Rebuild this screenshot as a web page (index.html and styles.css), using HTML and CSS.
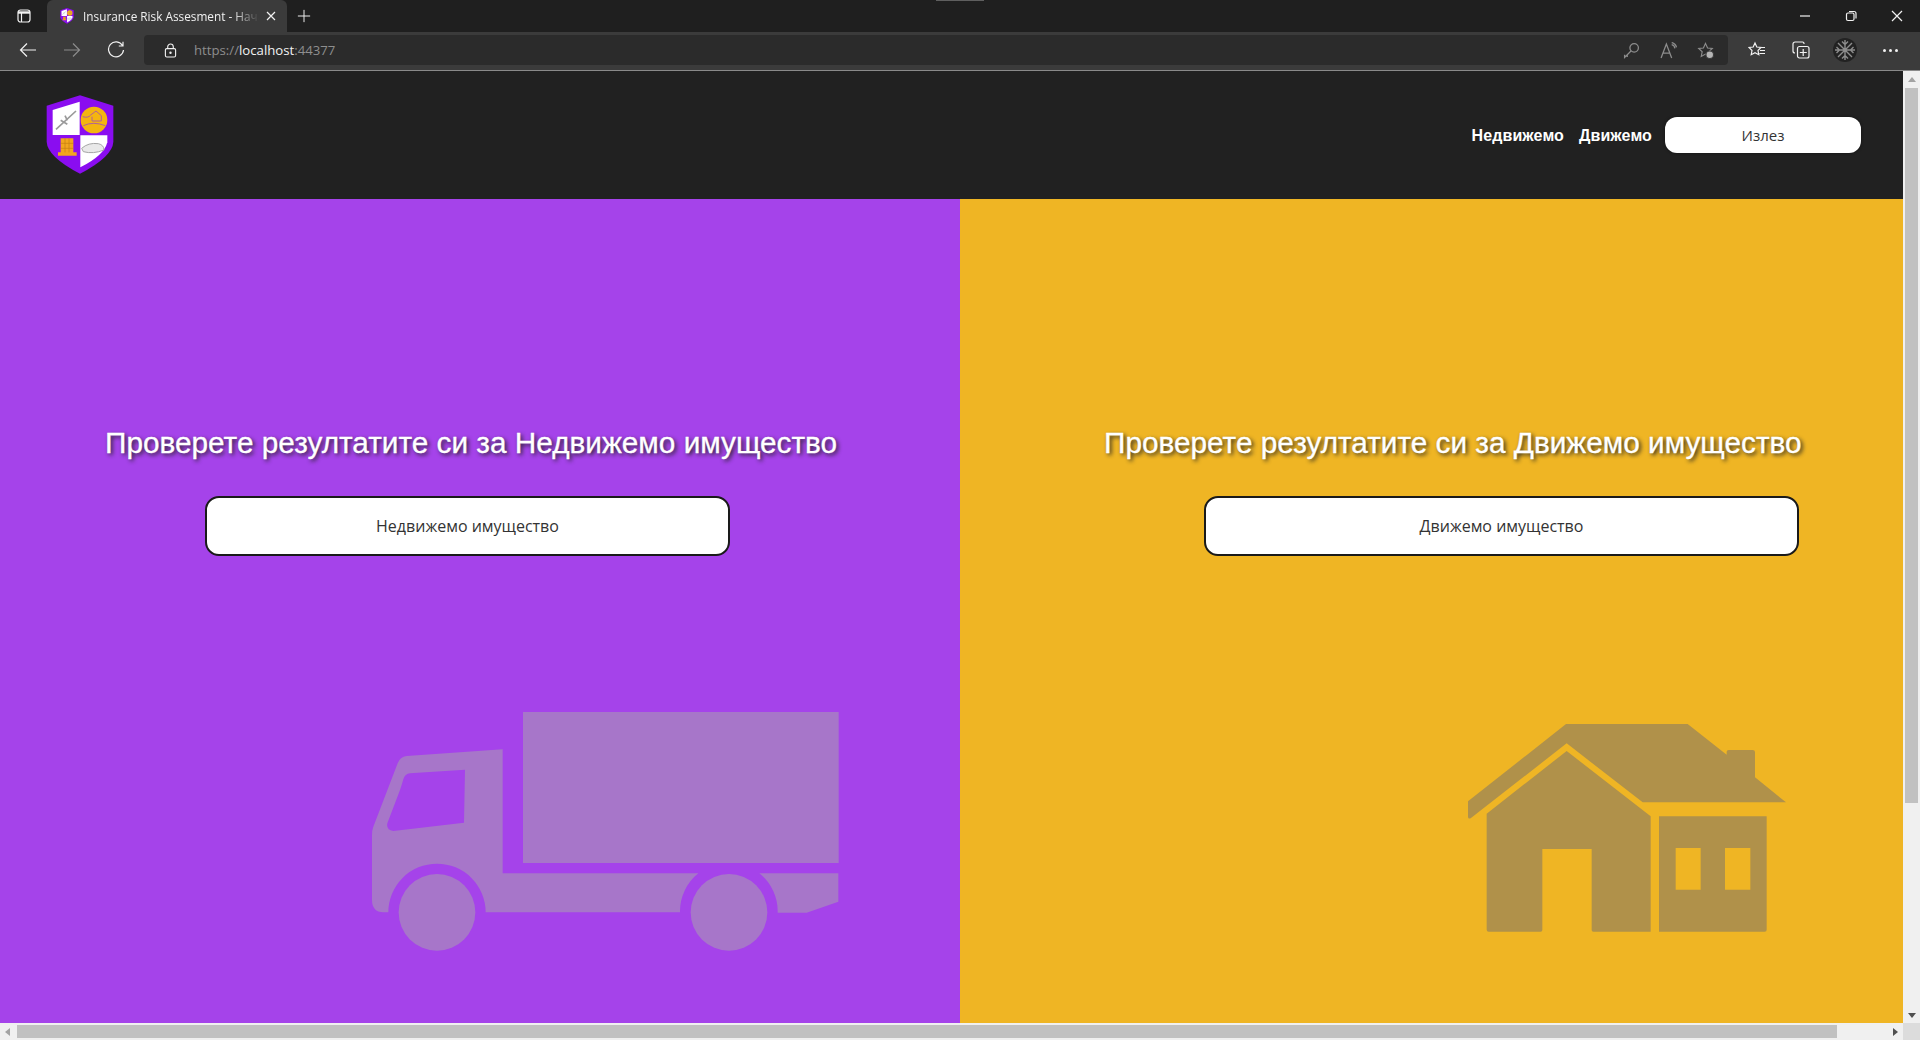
FILE: index.html
```html
<!DOCTYPE html>
<html lang="bg">
<head>
<meta charset="utf-8">
<title>Insurance Risk Assesment</title>
<link rel="stylesheet" href="styles.css">
</head>
<body>
<div class="tabstrip">
  <svg class="ic sidebar-ic" viewBox="0 0 14 14"><rect x="1" y="1" width="12" height="12" rx="2.500"/><path d="M1 3.500h12" stroke-width="2.400"/><path d="M4.500 4v9"/></svg>
  <div class="tab">
    <svg class="favicon" viewBox="0 0 300 300"><use href="#shield"/></svg>
    <span class="tab-title">Insurance Risk Assesment - Нача</span>
    <svg class="ic tab-close" viewBox="0 0 10 10"><path d="M1 1l8 8M9 1l-8 8"/></svg>
  </div>
  <svg class="ic tab-new" viewBox="0 0 16 16"><path d="M8 1v14M1 8h14"/></svg>
  <div class="grabber"></div>
  <div class="winctl">
    <svg class="ic" viewBox="0 0 12 12"><path d="M1 6h10"/></svg>
    <svg class="ic" viewBox="0 0 12 12"><rect x="1.500" y="3" width="7.500" height="7.500" rx="1.500"/><path d="M4 1.500h5a2 2 0 0 1 2 2v5"/></svg>
    <svg class="ic" viewBox="0 0 12 12"><path d="M1 1l10 10M11 1L1 11"/></svg>
  </div>
</div>
<div class="toolbar">
  <svg class="ic nav-ic" viewBox="0 0 18 18"><path d="M17 9H1.500M8 2.500L1.500 9 8 15.500"/></svg>
  <svg class="ic nav-ic dim" viewBox="0 0 18 18"><path d="M1 9h15.500M10 2.500L16.500 9 10 15.500"/></svg>
  <svg class="ic nav-ic" viewBox="0 0 18 18"><path d="M15.500 4.500A7.500 7.500 0 1 0 16.500 9M16 .8v4.200h-4.200"/></svg>
  <div class="urlbar">
    <svg class="ic lock" viewBox="0 0 14 16"><rect x="1.500" y="6" width="11" height="9" rx="1.500"/><path d="M4 6V4a3 3 0 0 1 6 0v2"/><circle cx="7" cy="10.500" r=".7"/></svg>
    <span class="url"><span class="url-dim">https://</span>localhost<span class="url-dim">:44377</span></span>
    <div class="url-actions">
      <svg class="ic dim" viewBox="0 0 16 16"><circle cx="10.500" cy="5.500" r="4"/><path d="M7.500 8.500L1.500 14.500v-2.500M4 12v2"/></svg>
      <svg class="ic dim" viewBox="0 0 16 16"><path d="M1 15L6 2l5 13M2.800 10.500h6.400M11 2.500a4 4 0 0 1 3 3.500M11 .5a6 6 0 0 1 4.500 4.500"/></svg>
      <svg class="ic dim" viewBox="0 0 18 18"><path d="M9 1.500l2.200 4.800 5 .6-3.700 3.400 1 5-4.500-2.500-4.500 2.500 1-5L1.800 6.900l5-.6z"/><circle class="solid" cx="13.500" cy="13.500" r="4"/></svg>
    </div>
  </div>
  <div class="tools">
    <svg class="ic" viewBox="0 0 18 18"><path d="M7 2l1.800 4 4.200.5-3 3 .8 4.200L7 11.600 3.200 13.700 4 9.500 1 6.500 5.200 6zM12 6.500h5M12 9.500h5M11.500 12.500h5.500"/></svg>
    <svg class="ic" viewBox="0 0 18 18"><rect x="5.500" y="5.500" width="11.500" height="11.500" rx="2"/><path d="M11.200 8v7M7.800 11.500h7M12 3V2.500A1.500 1.500 0 0 0 10.500 1H3a2 2 0 0 0-2 2v7A2 2 0 0 0 3 12h0"/></svg>
    <div class="avatar"><svg viewBox="0 0 24 24"><path d="M12 2v20M2 12h20M5 5l14 14M19 5L5 19M9 3.500l3 3 3-3M9 20.500l3-3 3 3M3.500 9l3 3-3 3M20.500 9l-3 3 3 3"/></svg></div>
    <div class="dots"><i></i><i></i><i></i></div>
  </div>
</div>
<div class="viewport">
  <main class="page">
    <header class="site-header">
      <svg class="logo" viewBox="0 0 300 300" aria-label="logo">
        <defs>
          <g id="shield">
            <path d="M150 31L250 62V170Q248 215 150 266Q52 215 50 170V62Z" fill="#8a0df0"/>
            <path d="M68 75L149 50V150H68Z" fill="#fff"/>
            <path d="M151 151H232V172Q222 212 151 247Z" fill="#fff"/>
            <circle cx="192" cy="105" r="40" fill="#f4b50f"/>
            <path d="M158 95Q175 100 182 90L198 78L214 92V108H186V95M160 122Q190 108 226 122" stroke="#b0619a" stroke-width="3" fill="none"/>
            <path d="M92 160H130V202H140V212H84V202H92Z" fill="#f2a61e"/>
            <path d="M105 160V202M117 160V202M92 175H130M92 190H130" stroke="#c47f10" stroke-width="2"/>
            <path d="M78 133L138 78M92 106L112 118M105 92L112 106" stroke="#9a9a9a" stroke-width="5" fill="none"/>
            <path d="M155 190Q175 172 205 176Q222 180 222 195Q190 208 160 200Z" fill="#e9e9e9" stroke="#a5a5a5" stroke-width="3"/>
          </g>
        </defs>
        <use href="#shield"/>
      </svg>
      <nav class="site-nav">
        <a class="nav-link">Недвижемо</a>
        <a class="nav-link">Движемо</a>
        <button class="logout">Излез</button>
      </nav>
    </header>
    <div class="panels">
      <section class="panel panel-left">
        <h2 class="panel-title title-left">Проверете резултатите си за Недвижемо имущество</h2>
        <button class="cta cta-left">Недвижемо имущество</button>
        <svg class="art truck" viewBox="0 0 1500 840">
          <path fill-rule="evenodd" d="M458 178L170 198Q150 200 143 220L70 410Q66 420 66 435V630Q66 666 100 667H115A146 146 0 0 1 407 667H990A146 146 0 0 1 1045 550H458ZM345 239L180 250Q165 251 160 268Q157 280 150 300L112 400Q108 420 130 423L342 398Z"/>
          <path d="M1228 550H1465V635L1370 668H1283A146 146 0 0 0 1228 550Z"/>
          <rect x="519" y="66" width="947" height="453"/>
          <circle cx="261" cy="667" r="115"/>
          <circle cx="1137" cy="667" r="115"/>
        </svg>
      </section>
      <section class="panel panel-right">
        <h2 class="panel-title title-right">Проверете резултатите си за Движемо имущество</h2>
        <button class="cta cta-right">Движемо имущество</button>
        <svg class="art house" viewBox="0 0 1140 780">
          <path d="M378 72H743L860 164V155Q860 150 866 150H938Q945 150 945 156V232L1038 307H608L380 130L92 355Q84 358 84 350V304Z"/>
          <path d="M380 153L632 349V695H460Q455 695 455 690V447H307V690Q307 695 302 695H146Q140 695 140 689V341Z"/>
          <path fill-rule="evenodd" d="M657 349H980V689Q980 695 974 695H657ZM707 444V569H782V444ZM855 444V569H931V444Z"/>
        </svg>
      </section>
    </div>
  </main>
  <div class="vscroll">
    <span class="arrow arrow-up"></span>
    <div class="vthumb"></div>
    <span class="arrow arrow-down"></span>
  </div>
</div>
<div class="hscroll">
  <span class="harrow harrow-left"></span>
  <div class="hthumb"></div>
  <span class="harrow harrow-right"></span>
  <div class="corner"></div>
</div>
</body>
</html>
```
FILE: styles.css
```css
* { box-sizing: border-box; }
html, body { margin: 0; height: 1040px; overflow: hidden; }
body { display: flex; flex-direction: column; width: 1920px; background: #212121; font-family: "Liberation Sans", Arial, sans-serif; }
.ic { fill: none; stroke: #f2f2f2; stroke-width: 1.2; display: block; flex: none; }
.ic.dim { stroke: #8c8c8c; }
.ic .solid { fill: #b5b5b5; stroke: #3b3b3b; }

.tabstrip { height: 32px; background: #1f1f1f; display: flex; align-items: center; flex: none; position: relative; }
.sidebar-ic { width: 14px; height: 14px; margin: 0 16px 0 17px; }
.tab { width: 240px; height: 32px; background: #3b3b3b; border-radius: 6px 6px 0 0; display: flex; align-items: center; padding: 0 11px; position: relative; }
.favicon { width: 20px; height: 20px; margin-right: 6px; margin-left: -1px; flex: none; }
.tab-title { font: 11.8px "Open Sans", sans-serif; color: #f0f0f0; width: 176px; white-space: nowrap; flex: none; -webkit-mask-image: linear-gradient(to right, #000 85%, transparent); mask-image: linear-gradient(to right, #000 85%, transparent); }
.tab-close { width: 10px; height: 10px; margin-left: 7px; }
.tab-new { width: 14px; height: 14px; margin-left: 10px; stroke-width: 1.1; }
.grabber { position: absolute; left: 936px; top: 0; width: 48px; height: 1px; background: #5f5f5f; }
.winctl { margin-left: auto; display: flex; align-items: center; gap: 34px; padding-right: 17px; }
.winctl svg { width: 12px; height: 12px; }

.toolbar { height: 39px; flex: none; background: #3b3b3b; border-bottom: 1px solid #8a8a8a; display: flex; align-items: center; padding: 0 0 2px 19px; }
.nav-ic { width: 18px; height: 18px; margin-right: 26px; }
.urlbar { width: 1584px; height: 30px; background: #2b2b2b; border-radius: 4px; margin-left: -7px; display: flex; align-items: center; padding-left: 20px; }
.lock { width: 13px; height: 15px; }
.url { font: 13.2px "Open Sans", sans-serif; color: #f2f2f2; margin-left: 17px; }
.url-dim { color: #8e8e8e; }
.url-actions { margin-left: auto; display: flex; align-items: center; gap: 20px; padding-right: 14px; }
.url-actions svg { width: 17px; height: 17px; }
.tools { display: flex; align-items: center; gap: 26px; margin-left: 20px; }
.tools svg { width: 18px; height: 18px; }
.avatar { width: 24px; height: 24px; border-radius: 50%; background: #222; margin-left: -3px; }
.avatar svg { width: 24px; height: 24px; fill: none; stroke: #8d8d8d; stroke-width: 1.4; display: block; }
.dots { display: flex; gap: 3px; margin-left: 0; }
.dots i { width: 3px; height: 3px; background: #f2f2f2; border-radius: 50%; }

.viewport { height: 952px; flex: none; display: flex; }
.page { width: 1903px; display: flex; flex-direction: column; }
.site-header { height: 128px; background: #212121; display: flex; align-items: center; justify-content: space-between; padding-right: 42px; flex: none; }
.logo { width: 100px; height: 100px; margin-left: 30px; }
.site-nav { display: flex; align-items: center; }
.nav-link { font: bold 16px/20px "Liberation Sans", sans-serif; letter-spacing: .1px; color: #fff; margin-top: 1px; }
.nav-link + .nav-link { margin-left: 15px; }
.logout { width: 196px; height: 36px; margin-left: 13px; background: #fff; border: 0; border-radius: 12px; font: 15px "Open Sans", sans-serif; color: #333; padding: 0; box-shadow: 0 0 3px #111; }

.panels { flex: 1; display: flex; }
.panel { display: flex; flex-direction: column; align-items: flex-start; padding-top: 225px; }
.panel-left { width: 960px; background: #a543ea; }
.panel-right { width: 943px; background: #efb524; }
.panel-title { margin: 0; font: 29.75px/38px "Liberation Sans", sans-serif; color: #fff; text-shadow: 2px 2px 4px #222; white-space: nowrap; -webkit-text-stroke: .3px #fff; }
.title-left { margin-left: 105px; }
.title-right { margin-left: 144px; }
.cta { height: 60px; margin-top: 34px; background: #fff; border: 2px solid #1a1a1a; border-radius: 14px; font: 16px "Open Sans", sans-serif; color: #333; padding: 0; }
.cta-left { width: 525px; margin-left: 205px; }
.cta-right { width: 595px; margin-left: 244px; }
.art { display: block; }
.truck { width: 500px; height: 280px; margin: 134px 0 0 350px; fill: #a776c9; }
.house { width: 380px; height: 260px; margin: 144px 0 0 480px; fill: #b0914a; }

.vscroll { width: 17px; background: #f0f0f0; display: flex; flex-direction: column; align-items: center; position: relative; }
.vthumb { width: 13px; height: 715px; background: #c1c1c1; margin-top: 6px; }
.arrow { width: 0; height: 0; border-left: 4px solid transparent; border-right: 4px solid transparent; }
.arrow-up { border-bottom: 5px solid #a3a3a3; margin-top: 6px; }
.arrow-down { border-top: 5px solid #505050; margin-top: auto; margin-bottom: 5px; }

.hscroll { height: 17px; flex: none; background: #f0f0f0; display: flex; align-items: center; }
.harrow { width: 0; height: 0; border-top: 4px solid transparent; border-bottom: 4px solid transparent; }
.harrow-left { border-right: 5px solid #a3a3a3; margin-left: 5px; }
.harrow-right { border-left: 5px solid #505050; margin-left: 56px; }
.hthumb { width: 1820px; height: 13px; background: #c1c1c1; margin-left: 7px; }
.corner { width: 17px; height: 17px; background: #dcdcdc; margin-left: auto; }
```
